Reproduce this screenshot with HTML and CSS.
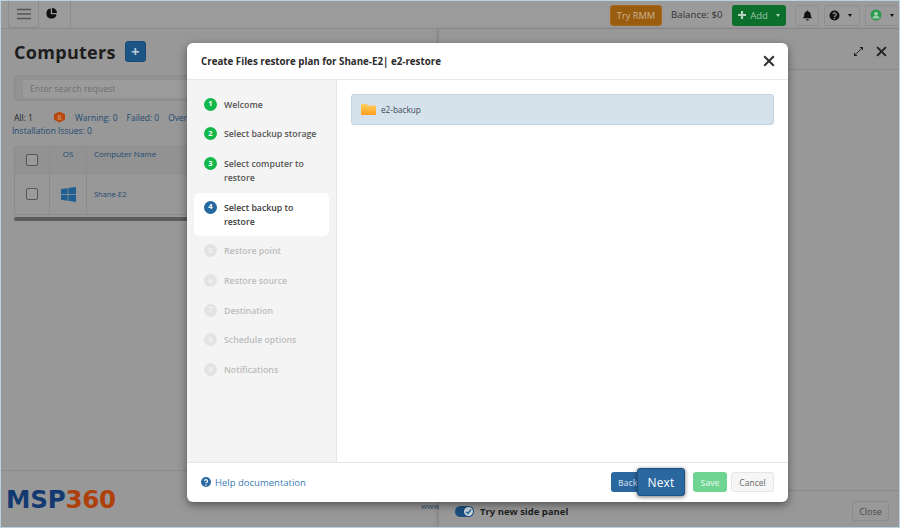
FILE: index.html
```html
<!DOCTYPE html>
<html lang="en">
<head>
<meta charset="utf-8">
<title>Computers</title>
<link rel="stylesheet" href="styles.css">
</head>
<body>
<div class="page">
  <header class="topbar">
    <div class="tb-left">
      <button class="burger"><svg width="14" height="12" viewBox="0 0 14 12"><path d="M0 1.500h14M0 6h14M0 10.500h14" stroke="#555" stroke-width="1.300" fill="none"/></svg></button>
      <div class="pie"><svg width="11" height="11" viewBox="0 0 12 12"><path d="M5.200.6A5.500 5.500 0 1 0 11.400 6.800H5.200Z" fill="#111"/><path d="M6.600 0A5.400 5.400 0 0 1 12 5.400H6.600Z" fill="#111"/></svg></div>
    </div>
    <div class="tb-right">
      <span class="rmm">Try RMM</span>
      <span class="balance">Balance: $0</span>
      <span class="add"><svg width="8" height="8" viewBox="0 0 8 8"><path d="M4 0v8M0 4h8" stroke="#b3d3bc" stroke-width="2.200"/></svg><span>Add</span><i class="caret caret-w"></i></span>
      <span class="tb-icon bell"><svg width="11" height="11" viewBox="0 0 12 12"><path d="M6 0.500a1 1 0 0 1 1 1 3.500 3.500 0 0 1 2.500 3.300c0 2.700 1 3.500 1.500 4.200H1c.5-.7 1.500-1.500 1.500-4.200A3.500 3.500 0 0 1 5 1.500a1 1 0 0 1 1-1ZM4.500 10h3a1.500 1.500 0 0 1-3 0Z" fill="#111"/></svg></span>
      <span class="tb-icon help"><svg width="11" height="11" viewBox="0 0 12 12"><circle cx="6" cy="6" r="5.500" fill="#111"/><path d="M4.300 4.600A1.800 1.800 0 1 1 6 6.800V7.500" stroke="#999" stroke-width="1.300" fill="none"/><circle cx="6" cy="9.300" r=".8" fill="#999"/></svg><i class="caret"></i></span>
      <span class="tb-icon user"><svg width="12" height="12" viewBox="0 0 12 12"><circle cx="6" cy="6" r="5.500" fill="#2c9a4d"/><circle cx="6" cy="4.700" r="2" fill="#9ed0ac"/><path d="M2.500 9.500a3.500 2.800 0 0 1 7 0" fill="#9ed0ac"/></svg><i class="caret"></i></span>
    </div>
  </header>
  <div class="work">
    <main class="main">
      <div class="title-row"><h1>Computers</h1><span class="title-add">+</span></div>
      <div class="search"><div class="search-input">Enter search request</div></div>
      <div class="stats">
        <span class="all">All: 1</span>
        <span class="hex">B</span>
        <span>Warning: 0</span><span>Failed: 0</span><span>Overdue: 0</span>
      </div>
      <div class="issues">Installation Issues: 0</div>
      <table class="grid">
        <tr class="head"><td class="c1"><i class="check"></i></td><td class="c2">OS</td><td class="c3">Computer Name</td></tr>
        <tr class="row"><td class="c1"><i class="check"></i></td><td class="c2"><svg width="15" height="15" viewBox="0 0 15 15"><path d="M0 2.100 6.600 1.200V7H0ZM7.300 1.100 15 0V7H7.300ZM0 7.800H6.600V13.700L0 12.800ZM7.300 7.800H15V15L7.300 13.800Z" fill="#1f5f93"/></svg></td><td class="c3 name">Shane-E2</td></tr>
      </table>
      <div class="scroll"></div>
      <footer class="main-foot"><span class="logo"><span class="msp">MSP</span><span class="n360">360</span></span><span class="www">www.msp360.com</span></footer>
    </main>
    <aside class="side">
      <div class="side-head">
        <svg width="9" height="9" viewBox="0 0 10 10"><path d="M6 0H10V4ZM0 10V6L4 10Z" fill="#222"/><path d="M2.500 7.500 7.500 2.500" stroke="#222" stroke-width="1.100"/></svg>
        <svg width="11" height="11" viewBox="0 0 12 12"><path d="M1.200 1.200l9.600 9.600M10.800 1.200l-9.600 9.600" stroke="#222" stroke-width="2.200"/></svg>
      </div>
      <div class="side-body"></div>
      <div class="side-foot">
        <span class="toggle"><span class="knob"><svg width="9" height="9" viewBox="0 0 9 9"><path d="M2 4.700 3.900 6.500 7 2.500" stroke="#1f5f93" stroke-width="1.300" fill="none"/></svg></span></span>
        <span class="toggle-label">Try new side panel</span>
        <span class="close-btn">Close</span>
      </div>
    </aside>
  </div>

  <section class="modal">
    <div class="m-head">
      <h2>Create Files restore plan for Shane-E2| e2-restore</h2>
      <svg width="12" height="12" viewBox="0 0 12 12"><path d="M1.200 1.200l9.600 9.600M10.800 1.200l-9.600 9.600" stroke="#333" stroke-width="2.100"/></svg>
    </div>
    <div class="m-body">
      <nav class="steps">
        <div class="step done"><span class="num">1</span><span class="lbl">Welcome</span></div>
        <div class="step done"><span class="num">2</span><span class="lbl">Select backup storage</span></div>
        <div class="step done"><span class="num">3</span><span class="lbl">Select computer to restore</span></div>
        <div class="step active"><span class="num">4</span><span class="lbl">Select backup to restore</span></div>
        <div class="step off"><span class="num">5</span><span class="lbl">Restore point</span></div>
        <div class="step off"><span class="num">6</span><span class="lbl">Restore source</span></div>
        <div class="step off"><span class="num">7</span><span class="lbl">Destination</span></div>
        <div class="step off"><span class="num">8</span><span class="lbl">Schedule options</span></div>
        <div class="step off"><span class="num">9</span><span class="lbl">Notifications</span></div>
      </nav>
      <div class="pane">
        <div class="backup">
          <svg width="15" height="11" viewBox="0 0 15 12" preserveAspectRatio="none"><defs><linearGradient id="fg" x1="0" y1="0" x2="0" y2="1"><stop offset="0" stop-color="#ffd060"/><stop offset="1" stop-color="#ff9f1c"/></linearGradient></defs><path d="M1 0H5.500L7 1.500H14A1 1 0 0 1 15 2.500V11A1 1 0 0 1 14 12H1A1 1 0 0 1 0 11V1A1 1 0 0 1 1 0Z" fill="url(#fg)"/></svg>
          <span>e2-backup</span>
        </div>
      </div>
    </div>
    <div class="m-foot">
      <a class="help-link"><svg width="10" height="10" viewBox="0 0 12 12"><circle cx="6" cy="6" r="6" fill="#2a6aa3"/><path d="M4.100 4.600A1.900 1.900 0 1 1 6 6.900V7.500" stroke="#fff" stroke-width="1.400" fill="none"/><circle cx="6" cy="9.500" r=".9" fill="#fff"/></svg>Help documentation</a>
      <div class="actions">
        <span class="btn back">Back</span>
        <span class="btn next">Next</span>
        <span class="btn save">Save</span>
        <span class="btn cancel">Cancel</span>
      </div>
    </div>
  </section>
</div>
</body>
</html>
```

FILE: styles.css
```css
* { box-sizing: border-box; }
html, body { margin: 0; padding: 0; }
body { width: 900px; height: 528px; overflow: hidden; font-family: "Open Sans", "Noto Sans", sans-serif; color: #222; }
.page { position: relative; width: 900px; height: 528px; border: 1px solid #b7d3df; background: #989898; display: flex; flex-direction: column; overflow: hidden; }

.topbar { height: 28px; flex: none; border-bottom: 1px solid #8b8b8b; display: flex; justify-content: space-between; align-items: center; background: #9b9b9b; }
.tb-left { display: flex; height: 27px; }
.burger { width: 31px; height: 27px; margin-left: 7px; border: 1px solid #8d8d8d; border-top: 0; border-radius: 0 0 3px 3px; background: #9b9b9b; padding: 0; display: flex; align-items: center; justify-content: center; }
.pie { width: 32px; border-right: 1px solid #8d8d8d; display: flex; align-items: center; justify-content: center; padding: 0 6px 3px 0; }
.tb-right { display: flex; align-items: center; font-size: 10px; padding-right: 2px; }
.rmm { width: 52px; height: 21px; margin-top: 1px; background: #9a5c0e; border: 1px solid #a8691b; border-radius: 3px; color: #c9b392; font-size: 9.300px; display: flex; align-items: center; justify-content: center; }
.balance { margin-left: 9px; width: 52px; color: #333; white-space: nowrap; font-size: 9.700px; }
.add { margin-left: 9px; width: 54px; height: 21px; margin-top: 1px; background: #0c6f2c; border-radius: 3px; color: #9bc4a7; font-size: 9.500px; display: flex; align-items: center; justify-content: center; gap: 4px; }
.caret { display: inline-block; width: 0; height: 0; border: 2.500px solid transparent; border-top: 3px solid #111; border-bottom: 0; margin-left: 8px; }
.caret-w { border-top-color: #b3d3bc; margin-left: 4px; }
.tb-icon { height: 21px; margin-top: 1px; border: 1px solid #8f8f8f; border-radius: 3px; display: flex; align-items: center; justify-content: center; }
.bell { margin-left: 9px; width: 24px; }
.help { margin-left: 5px; width: 36px; padding-right: 3px; }
.user { margin-left: 5px; width: 33px; margin-right: -1px; border-right: 0; padding-right: 1px; }

.work { flex: 1; display: flex; min-height: 0; }
.main { width: 438px; flex: none; display: flex; flex-direction: column; padding-left: 13px; }
.title-row { display: flex; align-items: center; gap: 9px; height: 46px; }
h1 { margin: 0; font-size: 18px; font-weight: 700; color: #1d1d1d; letter-spacing: .3px; }
.title-add { width: 21px; height: 21px; background: #1c5585; border: 1px solid #174a75; border-radius: 3px; color: #b9cddd; font-weight: 700; font-size: 15px; display: flex; align-items: center; justify-content: center; margin-bottom: 2px; }
.search { height: 26px; padding: 3px 7px; background: #929292; border: 1px solid #8c8c8c; border-radius: 3px; }
.search-input { height: 20px; background: #9b9b9b; border: 1px solid #919191; border-radius: 3px; padding-left: 7px; line-height: 18px; font-size: 8.500px; color: #6f6f6f; letter-spacing: .15px; }
.stats { margin-top: 7px; height: 18px; display: flex; align-items: center; font-size: 8.500px; color: #1f4a72; gap: 9px; white-space: nowrap; }
.all { color: #222; width: 31px; }
.hex { width: 11px; height: 11px; background: #b8480c; clip-path: polygon(50% 0, 100% 25%, 100% 75%, 50% 100%, 0 75%, 0 25%); color: #d9a27f; font-size: 7px; display: flex; align-items: center; justify-content: center; margin-right: 1px; }
.issues { margin-left: -2px; margin-top: -2px; font-size: 8.500px; color: #1f4a72; line-height: 13px; }
.grid { margin-top: 9px; width: 424px; border-collapse: collapse; font-size: 8px; color: #1f4a72; }
.grid td { border: 1px solid #8c8c8c; padding: 0; vertical-align: top; }
.head { height: 27px; background: #929292; }
.row { height: 41px; }
.row td { vertical-align: middle; }
.c1 { width: 35px; text-align: center; }
.c2 { width: 37px; text-align: center; padding-top: 1px !important; }
.c3 { padding: 1px 7px 0 !important; }
.head .c1 { vertical-align: middle; }
.row .c2 { padding-top: 0 !important; }
.row .c2 svg { display: block; margin: 0 auto; }
.row .c3 { padding-top: 0 !important; }
.name { font-size: 7.500px; }
.check { display: block; width: 12px; height: 12px; margin: 0 auto; border: 1px solid #555; border-radius: 2px; background: #9b9b9b; }
.scroll { width: 424px; height: 4px; margin-top: 2px; background: #5c5c5c; border-radius: 2px; }
.main-foot { margin-top: auto; height: 57px; margin-left: -13px; border-top: 1px solid #8b8b8b; padding: 15px 0 0 5px; position: relative; }
.logo { font-size: 24.500px; line-height: 28px; font-weight: 700; letter-spacing: -.2px; font-family: "DejaVu Sans", sans-serif; display: block; }
.msp { color: #123a70; }
.n360 { color: #ae400c; }
.www { position: absolute; left: 420px; top: 29px; font-size: 8px; color: #2e4d6c; white-space: nowrap; }
.side { flex: 1; display: flex; flex-direction: column; box-shadow: -2px 0 3px rgba(0,0,0,.12); background: #989898; position: relative; }
.side-head { height: 41px; flex: none; border-bottom: 1px solid #8a8a8a; display: flex; align-items: center; justify-content: flex-end; gap: 13px; padding: 4px 12px 0 0; }
.side-body { flex: 1; }
.side-foot { height: 37px; flex: none; border-top: 1px solid #8a8a8a; display: flex; align-items: center; padding: 4px 10px 0 16px; }
.toggle { width: 19px; height: 11px; background: #1c4f7d; border-radius: 6px; display: flex; align-items: center; justify-content: flex-end; padding-right: 1px; }
.knob { width: 9px; height: 9px; border-radius: 50%; background: #c8d4dc; display: flex; }
.toggle-label { margin-left: 6px; font-size: 9.500px; font-weight: 700; color: #1f1f1f; }
.close-btn { margin-left: auto; width: 37px; height: 20px; border: 1px solid #8a8a8a; border-radius: 3px; font-size: 9px; color: #4a4a4a; display: flex; align-items: center; justify-content: center; }

.modal { position: absolute; left: 186px; top: 42px; width: 601px; height: 459px; background: #fff; border-radius: 6px; box-shadow: 0 3px 9px rgba(0,0,0,.45); display: flex; flex-direction: column; }
.m-head { height: 37px; flex: none; border-bottom: 1px solid #e8e8e8; display: flex; justify-content: space-between; align-items: center; padding: 0 13px 0 14px; }
h2 { margin: 0; font-size: 9.750px; font-weight: 700; color: #2b2b2b; }
.m-body { flex: 1; display: flex; min-height: 0; }
.steps { width: 150px; flex: none; background: #f4f4f4; border-right: 1px solid #e5e5e5; padding: 9.500px 7px 0; display: flex; flex-direction: column; }
.step { display: flex; gap: 7px; padding: 8px 10px 7.700px; font-size: 8.750px; line-height: 14px; font-weight: 600; min-height: 29.700px; border-radius: 5px; }
.num { flex: none; width: 13px; height: 13px; border-radius: 50%; color: #fff; font-size: 7.500px; font-weight: 700; display: flex; align-items: center; justify-content: center; line-height: 1; }
.done .num { background: #12b84b; }
.done .lbl { color: #555; }
.active { background: #fff; }
.active .num { background: #24689f; }
.active .lbl { color: #3a3a3a; }
.off .num { background: #e3e3e3; color: #f4f4f4; }
.off .lbl { color: #bcbcbc; }
.pane { flex: 1; padding: 14px 14px 0 14px; }
.backup { height: 31px; background: #d5e1eb; border: 1px solid #c3d3e2; border-radius: 3px; display: flex; align-items: center; gap: 5px; padding: 0 0 1px 9px; font-size: 8.200px; color: #3a4a58; }
.m-foot { height: 40px; flex: none; border-top: 1px solid #e5e5e5; display: flex; align-items: center; justify-content: space-between; padding: 0 14px 1px 14px; }
.help-link { display: flex; align-items: center; gap: 4px; font-size: 9.500px; color: #3b7cb5; }
.actions { display: flex; align-items: center; }
.btn { display: flex; align-items: center; justify-content: center; height: 20px; border-radius: 3px; font-size: 8.500px; font-weight: 600; }
.back { width: 34px; background: #2a679f; color: #b9cfe2; justify-content: flex-start; padding-left: 7px; }
.next { width: 48px; height: 28px; margin-left: -8px; position: relative; background: #2a679f; border: 1px solid #1e5283; border-radius: 3px; color: #fff; font-size: 12px; font-weight: 400; box-shadow: 0 1px 4px rgba(0,0,0,.55); letter-spacing: .2px; }
.save { width: 34px; margin-left: 8px; background: #6fd391; color: #d5f3e0; }
.cancel { width: 43px; margin-left: 4px; background: #f6f6f6; border: 1px solid #e5e5e5; color: #666; font-weight: 400; }
```
